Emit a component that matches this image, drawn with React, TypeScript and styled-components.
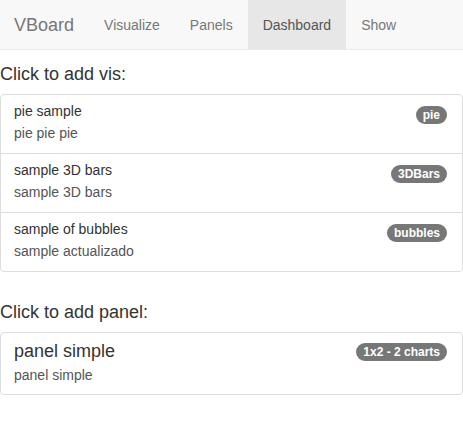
import React from "react";
import styled, { createGlobalStyle } from "styled-components";

const Global = createGlobalStyle`
  html, body { margin: 0; padding: 0; background: #fff; }
  body {
    font-family: "Liberation Sans", Arial, sans-serif;
    font-size: 14px;
    line-height: 1.42857;
    color: #333;
  }
  * { box-sizing: border-box; }
`;

const Navbar = styled.nav`
  display: flex;
  align-items: stretch;
  height: 50px;
  background: #f8f8f8;
  border-bottom: 1px solid #e7e7e7;
`;

const Brand = styled.a`
  display: block;
  padding: 15px 15px 0 14px;
  height: 50px;
  font-size: 18px;
  line-height: 20px;
  color: #777;
  text-decoration: none;
`;

const NavList = styled.ul`
  display: flex;
  list-style: none;
  margin: 0;
  padding: 0;
`;

const NavItem = styled.li<{ $active?: boolean }>`
  display: block;
  padding: 15px 15px 0;
  height: 50px;
  line-height: 20px;
  color: ${(p) => (p.$active ? "#555" : "#777")};
  background: ${(p) => (p.$active ? "#e7e7e7" : "transparent")};
  cursor: pointer;
`;

const SectionTitle = styled.h4<{ $top: number }>`
  margin: ${(p) => p.$top}px 0 10px;
  font-size: 18px;
  font-weight: 500;
  line-height: 20px;
  color: #333;
`;

const ListGroup = styled.div`
  width: 463px;
  border: 1px solid #ddd;
  border-radius: 4px;
  background: #fff;
`;

const Item = styled.div<{ $big?: boolean }>`
  display: flex;
  justify-content: space-between;
  align-items: flex-start;
  padding: ${(p) => (p.$big ? "7px 15px 9px 13px" : "6px 15px 10px 13px")};
  border-top: 1px solid #ddd;
  &:first-child { border-top: none; }
`;

const ItemText = styled.div`
  display: flex;
  flex-direction: column;
`;

const ItemHeading = styled.div<{ $big?: boolean }>`
  font-size: ${(p) => (p.$big ? "18px" : "14px")};
  line-height: ${(p) => (p.$big ? "22px" : "20px")};
  margin-bottom: ${(p) => (p.$big ? "3px" : "2px")};
  color: #333;
`;

const ItemDesc = styled.div`
  font-size: 14px;
  line-height: 20px;
  color: #555;
`;

const Badge = styled.span<{ $offset: number }>`
  display: inline-block;
  margin-top: ${(p) => p.$offset}px;
  padding: 3px 7px;
  font-size: 12px;
  font-weight: bold;
  line-height: 1;
  color: #fff;
  background: #777;
  border-radius: 10px;
  white-space: nowrap;
`;

const vis = [
  { t: "pie sample", d: "pie pie pie", b: "pie" },
  { t: "sample 3D bars", d: "sample 3D bars", b: "3DBars" },
  { t: "sample of bubbles", d: "sample actualizado", b: "bubbles" },
];

export default function App() {
  return (
    <>
      <Global />
      <Navbar>
        <Brand>VBoard</Brand>
        <NavList>
          <NavItem>Visualize</NavItem>
          <NavItem>Panels</NavItem>
          <NavItem $active>Dashboard</NavItem>
          <NavItem>Show</NavItem>
        </NavList>
      </Navbar>
      <SectionTitle $top={14}>Click to add vis:</SectionTitle>
      <ListGroup>
        {vis.map((v) => (
          <Item key={v.t}>
            <ItemText>
              <ItemHeading>{v.t}</ItemHeading>
              <ItemDesc>{v.d}</ItemDesc>
            </ItemText>
            <Badge $offset={5}>{v.b}</Badge>
          </Item>
        ))}
      </ListGroup>
      <SectionTitle $top={30}>Click to add panel:</SectionTitle>
      <ListGroup>
        <Item $big>
          <ItemText>
            <ItemHeading $big>panel simple</ItemHeading>
            <ItemDesc>panel simple</ItemDesc>
          </ItemText>
          <Badge $offset={3}>1x2 - 2 charts</Badge>
        </Item>
      </ListGroup>
    </>
  );
}
